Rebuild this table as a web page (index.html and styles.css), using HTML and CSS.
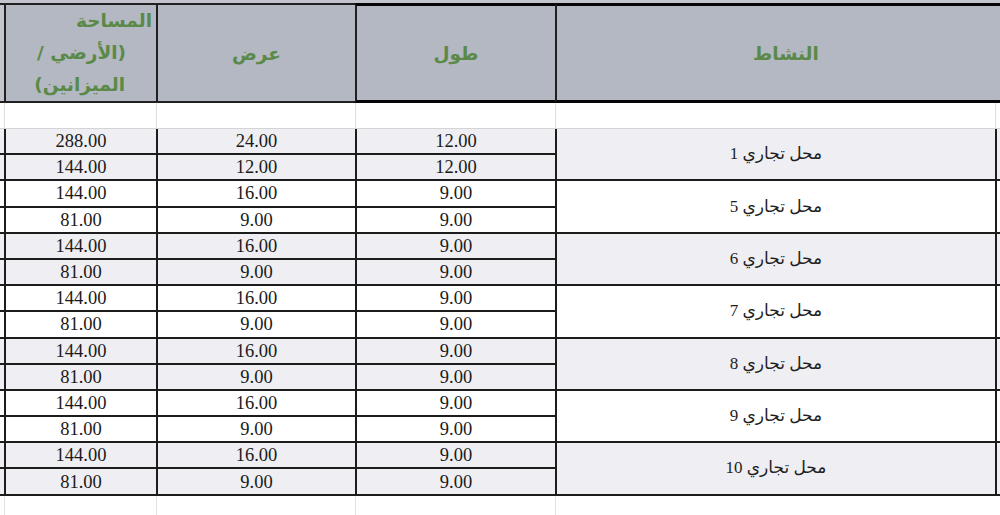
FILE: index.html
```html
<!DOCTYPE html>
<html lang="ar">
<head>
<meta charset="utf-8">
<title>جدول المحلات</title>
<link rel="stylesheet" href="styles.css">
</head>
<body>
<div class="top"></div>
<table class="sheet" dir="rtl">
  <colgroup>
    <col class="c-stubr"><col class="c-act"><col class="c-len"><col class="c-wid"><col class="c-area"><col class="c-stubl">
  </colgroup>
  <tr class="hdr">
    <th class="stub-r"></th>
    <th class="thick h-act">النشاط</th>
    <th class="thick">طول</th>
    <th>عرض</th>
    <th class="h-area"><span class="l1">المساحة</span><span class="l2">(الأرضي /</span><span class="l3">الميزانين)</span></th>
    <th class="stub-l"></th>
  </tr>
  <tr class="blank">
    <td class="stub-r"></td><td></td><td></td><td></td><td></td><td class="stub-l"></td>
  </tr>

  <tr class="d g"><td class="stub-r" rowspan="2"></td><td class="act" rowspan="2">محل تجاري 1</td><td>12.00</td><td>24.00</td><td>288.00</td><td class="stub-l"></td></tr>
  <tr class="d g"><td>12.00</td><td>12.00</td><td>144.00</td><td class="stub-l"></td></tr>

  <tr class="d"><td class="stub-r" rowspan="2"></td><td class="act" rowspan="2">محل تجاري 5</td><td>9.00</td><td>16.00</td><td>144.00</td><td class="stub-l"></td></tr>
  <tr class="d"><td>9.00</td><td>9.00</td><td>81.00</td><td class="stub-l"></td></tr>

  <tr class="d g"><td class="stub-r" rowspan="2"></td><td class="act" rowspan="2">محل تجاري 6</td><td>9.00</td><td>16.00</td><td>144.00</td><td class="stub-l"></td></tr>
  <tr class="d g"><td>9.00</td><td>9.00</td><td>81.00</td><td class="stub-l"></td></tr>

  <tr class="d"><td class="stub-r" rowspan="2"></td><td class="act" rowspan="2">محل تجاري 7</td><td>9.00</td><td>16.00</td><td>144.00</td><td class="stub-l"></td></tr>
  <tr class="d"><td>9.00</td><td>9.00</td><td>81.00</td><td class="stub-l"></td></tr>

  <tr class="d g"><td class="stub-r" rowspan="2"></td><td class="act" rowspan="2">محل تجاري 8</td><td>9.00</td><td>16.00</td><td>144.00</td><td class="stub-l"></td></tr>
  <tr class="d g"><td>9.00</td><td>9.00</td><td>81.00</td><td class="stub-l"></td></tr>

  <tr class="d"><td class="stub-r" rowspan="2"></td><td class="act" rowspan="2">محل تجاري 9</td><td>9.00</td><td>16.00</td><td>144.00</td><td class="stub-l"></td></tr>
  <tr class="d"><td>9.00</td><td>9.00</td><td>81.00</td><td class="stub-l"></td></tr>

  <tr class="d g"><td class="stub-r" rowspan="2"></td><td class="act" rowspan="2">محل تجاري 10</td><td>9.00</td><td>16.00</td><td>144.00</td><td class="stub-l"></td></tr>
  <tr class="d g"><td>9.00</td><td>9.00</td><td>81.00</td><td class="stub-l"></td></tr>

  <tr class="filler">
    <td class="stub-r"></td><td></td><td></td><td></td><td></td><td class="stub-l"></td>
  </tr>
</table>
</body>
</html>
```
FILE: styles.css
```css
* { box-sizing: border-box; }

body {
  margin: 0;
  width: 1000px;
  height: 515px;
  overflow: hidden;
  background: #ffffff;
  font-family: "Liberation Serif", "DejaVu Sans", serif;
  color: #1a1a1a;
}

.top {
  height: 3px;
  background: #c3c4ce;
}

.sheet {
  width: 1000px;
  table-layout: fixed;
  border-collapse: separate;
  border-spacing: 0;
}

.c-stubr { width: 5px; }
.c-act { width: 440px; }
.c-len { width: 200px; }
.c-wid { width: 199px; }
.c-area { width: 152px; }
.c-stubl { width: 4px; }

th, td { padding: 0; }

/* header */
.hdr th {
  height: 99px;
  background: #b3b8c2;
  color: #5a8948;
  font-family: "DejaVu Sans", sans-serif;
  font-weight: bold;
  font-size: 18.5px;
  text-align: center;
  vertical-align: middle;
  border-top: 2px solid #202020;
  border-bottom: 2px solid #202020;
  border-left: 2px solid #202020;
}
.hdr th.thick {
  border-top: 3px solid #050505;
  border-bottom: 3px solid #050505;
}
.hdr th.stub-r {
  border-left: none;
  border-top: 3px solid #050505;
  border-bottom: 3px solid #050505;
}
.hdr th.stub-l {
  border-left: none;
  background: #c3c4ce;
}
.hdr .h-act { padding-left: 20px; }

.h-area span {
  display: block;
  line-height: 32px;
  white-space: nowrap;
}
.h-area .l1 { text-align: right; padding-right: 4px; }
.h-area .l2 { text-align: right; padding-right: 30px; }
.h-area .l3 { text-align: right; padding-right: 31px; }

/* blank spacer row */
.blank td {
  height: 26px;
  background: #ffffff;
  border-left: 1px solid #dedede;
  border-bottom: 1px solid #d4d4d6;
}
.blank td.stub-l { border-left: none; }

/* data rows */
.d td {
  height: 26.2px;
  font-size: 18.5px;
  line-height: 20px;
  text-align: center;
  vertical-align: middle;
  border-left: 2px solid #1c1c1c;
  border-bottom: 2px solid #1c1c1c;
  background: #ffffff;
}
.d.g td { background: #efeef2; }
.d td.stub-l { border-left: none; }
.d td.act {
  height: auto;
  font-size: 17px;
  font-family: "Liberation Serif", "DejaVu Sans", serif;
  color: #1e1e1e;
}

/* trailing empty grid */
.filler td {
  height: 20px;
  border-left: 1px solid #e2e2e2;
}
.filler td.stub-l, .filler td.stub-r { border-left: none; }
```
